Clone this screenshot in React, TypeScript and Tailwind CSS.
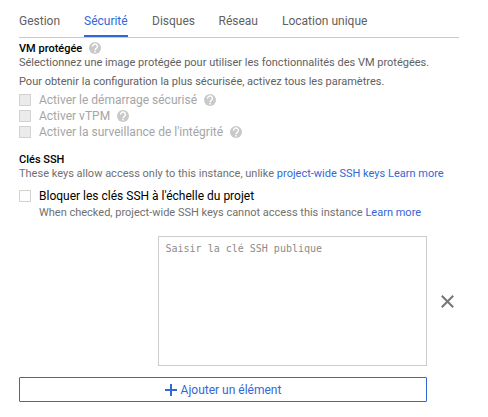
import React from 'react';

function Help({ className = '' }: { className?: string }) {
  return (
    <svg className={`size-3 shrink-0 ${className}`} viewBox="0 0 24 24" aria-hidden="true">
      <circle cx="12" cy="12" r="12" fill="#c9c9c9" />
      <path d="M7.2 9.3a4.8 4.8 0 1 1 7.8 3.3c-1.7 1.3-3 1.9-3 3.9" fill="none" stroke="#fff" strokeWidth="2.8" />
      <rect x="10.5" y="18" width="3" height="3" fill="#fff" />
    </svg>
  );
}

const tabs = [
  { label: 'Gestion', style: 'w-[41px] mr-6 text-[#616161]' },
  { label: 'Sécurité', style: 'w-11 mr-6 text-[#3367d6] border-b-2 border-[#3367d6]' },
  { label: 'Disques', style: 'w-[42px] mr-[24.5px] text-[#616161]' },
  { label: 'Réseau', style: 'w-[39px] mr-[24.5px] text-[#616161]' },
  { label: 'Location unique', style: 'w-[86px] text-[#616161]' },
];

const options = ['Activer le démarrage sécurisé', 'Activer vTPM', "Activer la surveillance de l'intégrité"];

export default function App() {
  return (
    <main className="h-[417px] w-[488px] overflow-hidden bg-white pl-[19px] font-['Roboto',sans-serif] text-[#616161]">
      <nav className="flex h-[38px] w-[440px] border-b border-[#c9c9c9] pt-[13px]">
        {tabs.map((tab) => (
          <button key={tab.label} className={`h-6 whitespace-nowrap pb-2 text-left text-xs leading-4 ${tab.style}`}>
            {tab.label}
          </button>
        ))}
      </nav>

      <section className="whitespace-nowrap text-[11px] leading-[14px]">
        <h2 className="mt-[3px] flex h-[15px] items-start font-medium text-black">
          <span className="pt-px">VM protégée</span>
          <Help className="ml-[7px] mt-px" />
        </h2>
        <p>Sélectionnez une image protégée pour utiliser les fonctionnalités des VM protégées.</p>
        <p className="mt-[5px]">Pour obtenir la configuration la plus sécurisée, activez tous les paramètres.</p>
        <div className="mt-[3px]">
          {options.map((option) => (
            <label key={option} className="flex h-4 items-center text-xs text-[#a5a5a5]">
              <span className="mr-2 size-3 border border-[#d2d2d2] bg-[#ebebeb]" />
              {option}
              <Help className="ml-[7px]" />
            </label>
          ))}
        </div>
      </section>

      <section className="whitespace-nowrap text-[11px] leading-[14px]">
        <h2 className="mt-[13px] font-medium text-black">Clés SSH</h2>
        <p className="text-[#707070]">
          These keys allow access only to this instance, unlike{' '}
          <span className="text-[#3367d6]">project-wide SSH keys Learn more</span>
        </p>
        <label className="mt-[7px] flex h-4 items-center text-xs text-black">
          <span className="mr-2 size-3 border border-[#d2d2d2] bg-white" />
          Bloquer les clés SSH à l'échelle du projet
        </label>
        <p className="ml-5 mt-0.5 text-[#707070]">
          When checked, project-wide SSH keys cannot access this instance <span className="text-[#3367d6]">Learn more</span>
        </p>
      </section>

      <div className="ml-[139px] mt-4 flex items-center">
        <textarea
          className="block h-[130px] w-[269px] resize-none border border-[#cccccc] px-[6.5px] py-[5px] font-['DejaVu_Sans_Mono',monospace] text-[10px] leading-[14px] outline-none placeholder:text-[#8c8c8c] placeholder:opacity-100"
          placeholder="Saisir la clé SSH publique"
        />
        <svg className="ml-[13.5px] size-[13px]" viewBox="0 0 13 13" aria-label="Supprimer">
          <path d="M.8.8 12.2 12.2M12.2.8.8 12.2" stroke="#757575" strokeWidth="2" />
        </svg>
      </div>

      <button className="mt-[11px] flex h-[25px] w-[408px] items-center justify-center rounded-[1px] border border-[#3367d6] text-xs text-[#3367d6]">
        <svg className="mr-1 size-3" viewBox="0 0 12 12" aria-hidden="true">
          <path d="M0 6h12M6 0v12" stroke="#3367d6" strokeWidth="2" />
        </svg>
        <span className="pt-px">Ajouter un élément</span>
      </button>
    </main>
  );
}
